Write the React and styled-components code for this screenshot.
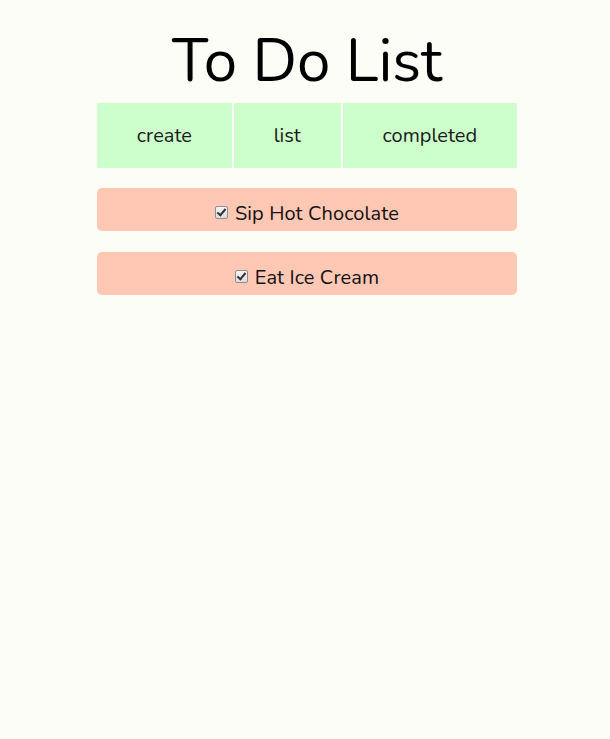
import React from "react";
import styled, { createGlobalStyle } from "styled-components";

const Global = createGlobalStyle`
  html, body { margin: 0; padding: 0; background: #fdfdf8; }
  body { font-family: "Nunito", "Lato", "Open Sans", sans-serif; color: #111; }
`;

const Page = styled.div`
  width: 420px;
  margin: 0 0 0 calc(50% - 208px);
  padding-top: 27px;
  display: flex;
  flex-direction: column;
  align-items: stretch;
`;

const Title = styled.h1`
  margin: 0 0 8px;
  text-align: center;
  font-size: 60px;
  font-weight: 400;
  line-height: 68px;
  color: #000;
`;

const Nav = styled.nav`
  display: flex;
  gap: 2px;
  height: 65px;
`;

const Tab = styled.div`
  flex: 1 1 auto;
  display: flex;
  align-items: center;
  justify-content: center;
  padding: 0 39px;
  background: #ccffcc;
  font-size: 20px;
  color: #1a1a1a;
`;

const List = styled.div`
  display: flex;
  flex-direction: column;
  gap: 21px;
  margin-top: 20px;
`;

const Item = styled.label`
  display: flex;
  align-items: center;
  justify-content: center;
  gap: 7px;
  height: 43px;
  padding-top: 7px;
  box-sizing: border-box;
  background: #ffc8b5;
  border-radius: 5px;
  font-size: 20px;
  letter-spacing: 0.1px;
  color: #111;
`;

const Check = styled.input`
  appearance: none;
  -webkit-appearance: none;
  margin: 0;
  margin-top: -2px;
  width: 13px;
  height: 13px;
  box-sizing: border-box;
  border: 1px solid #8f8f8f;
  border-radius: 2px;
  background: linear-gradient(#f4f4f4, #dcdcdc);
  position: relative;
  &:checked::after {
    content: "";
    position: absolute;
    left: 3px;
    top: 0px;
    width: 3px;
    height: 7px;
    border: solid #333;
    border-width: 0 2px 2px 0;
    transform: rotate(40deg);
  }
`;

export default function App() {
  const items = ["Sip Hot Chocolate", "Eat Ice Cream"];
  return (
    <>
      <Global />
      <Page>
        <Title>To Do List</Title>
        <Nav>
          <Tab>create</Tab>
          <Tab>list</Tab>
          <Tab>completed</Tab>
        </Nav>
        <List>
          {items.map((t) => (
            <Item key={t}>
              <Check type="checkbox" defaultChecked />
              {t}
            </Item>
          ))}
        </List>
      </Page>
    </>
  );
}
